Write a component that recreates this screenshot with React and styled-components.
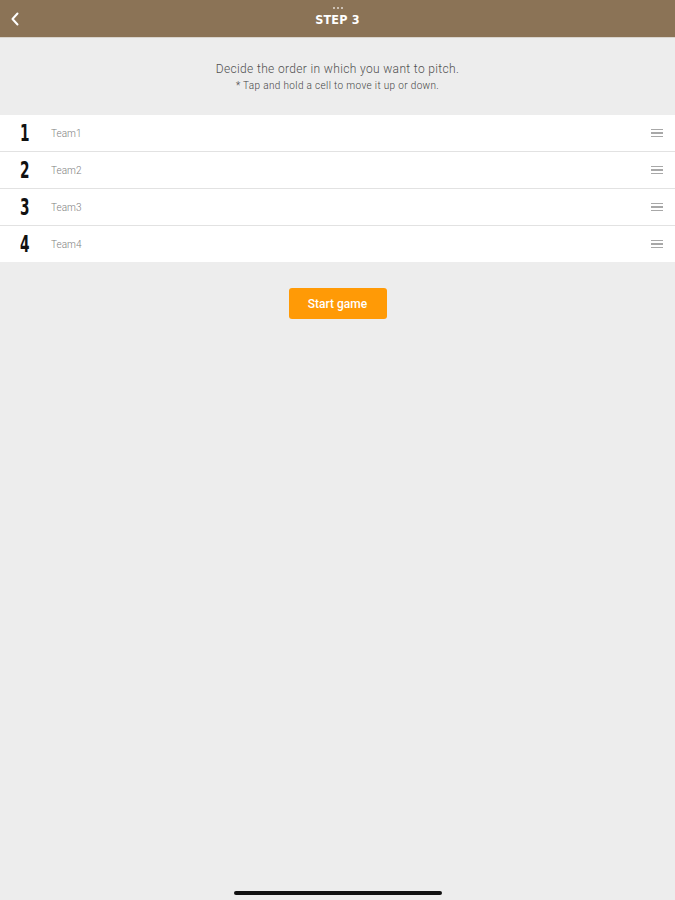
import React from 'react';
import styled, { createGlobalStyle } from 'styled-components';

const GlobalStyle = createGlobalStyle`
    html, body {
        margin: 0;
        padding: 0;
        background: #ededed;
        font-family: "Liberation Sans", Arial, sans-serif;
    }
`;

const Screen = styled.div`
    width: 675px;
    height: 900px;
    display: flex;
    flex-direction: column;
    background: #ededed;
    position: relative;
    overflow: hidden;
`;

const Header = styled.div`
    height: 37px;
    background: #8b7356;
    display: grid;
    grid-template-columns: 30px 1fr 30px;
    align-items: center;
    color: #fff;
    border-bottom: 1px solid #d9d4cc;
`;

const BackButton = styled.div`
    display: flex;
    align-items: center;
    justify-content: center;
    height: 100%;
`;

const TitleBox = styled.div`
    display: flex;
    flex-direction: column;
    align-items: center;
    margin-top: -3px;
`;

const Dots = styled.div`
    display: flex;
    gap: 2px;
    height: 5px;
    span {
        width: 2px;
        height: 2px;
        border-radius: 50%;
        background: rgba(255, 255, 255, 0.75);
    }
`;

const Title = styled.div`
    font-family: "DejaVu Sans Condensed", "DejaVu Sans", sans-serif;
    font-stretch: condensed;
    font-weight: bold;
    font-size: 12.5px;
    letter-spacing: 0.2px;
`;

const Intro = styled.div`
    display: flex;
    flex-direction: column;
    align-items: center;
    padding: 24px 0 23px;
`;

const IntroMain = styled.div`
    font-family: Roboto, "Liberation Sans", sans-serif;
    font-weight: 300;
    font-size: 12px;
    letter-spacing: 0.35px;
    color: #505050;
    line-height: 14px;
`;

const IntroNote = styled.div`
    font-family: Roboto, "Liberation Sans", sans-serif;
    font-weight: 300;
    font-size: 10px;
    letter-spacing: 0.35px;
    color: #444;
    margin-top: 4px;
    line-height: 12px;
`;

const List = styled.div`
    display: flex;
    flex-direction: column;
    gap: 1px;
    background: #e2e2e2;
`;

const Row = styled.div`
    height: 36px;
    background: #fff;
    display: flex;
    align-items: center;
    padding: 0 12px 0 20px;
`;

const Num = styled.div`
    width: 31px;
    font-family: "DejaVu Sans Condensed", "DejaVu Sans", sans-serif;
    font-stretch: condensed;
    font-weight: bold;
    font-size: 23px;
    color: #111;
    transform: scaleX(0.66);
    transform-origin: left center;
`;

const TeamName = styled.div`
    flex: 1;
    font-family: Roboto, "Liberation Sans", sans-serif;
    font-weight: 300;
    font-size: 10px;
    color: #808080;
`;

const Handle = styled.div`
    width: 12px;
    display: flex;
    flex-direction: column;
    gap: 2px;
    span {
        height: 1.5px;
        background: #a8a8a8;
    }
`;

const ButtonRow = styled.div`
    display: flex;
    justify-content: center;
    padding-top: 26px;
`;

const StartButton = styled.button`
    width: 98px;
    height: 31px;
    border: none;
    border-radius: 3px;
    background: #ff9a06;
    color: #fff;
    font-family: Roboto, "Liberation Sans", sans-serif;
    font-weight: 500;
    font-size: 12px;
    cursor: pointer;
`;

const HomeBar = styled.div`
    position: absolute;
    left: 234px;
    bottom: 5px;
    width: 208px;
    height: 4px;
    border-radius: 2px;
    background: #111;
`;

const teams = ['Team1', 'Team2', 'Team3', 'Team4'];

export default function App() {
    return (
        <Screen>
            <GlobalStyle />
            <Header>
                <BackButton>
                    <svg width="10" height="14" viewBox="0 0 10 14">
                        <path d="M7.5 1.5 L2.5 7 L7.5 12.5" stroke="#fff" strokeWidth="2" fill="none" strokeLinecap="round" strokeLinejoin="round" />
                    </svg>
                </BackButton>
                <TitleBox>
                    <Dots><span /><span /><span /></Dots>
                    <Title>STEP 3</Title>
                </TitleBox>
                <div />
            </Header>
            <Intro>
                <IntroMain>Decide the order in which you want to pitch.</IntroMain>
                <IntroNote>* Tap and hold a cell to move it up or down.</IntroNote>
            </Intro>
            <List>
                {teams.map((t, i) => (
                    <Row key={t}>
                        <Num>{i + 1}</Num>
                        <TeamName>{t}</TeamName>
                        <Handle><span /><span /><span /></Handle>
                    </Row>
                ))}
            </List>
            <ButtonRow>
                <StartButton>Start game</StartButton>
            </ButtonRow>
            <HomeBar />
        </Screen>
    );
}
